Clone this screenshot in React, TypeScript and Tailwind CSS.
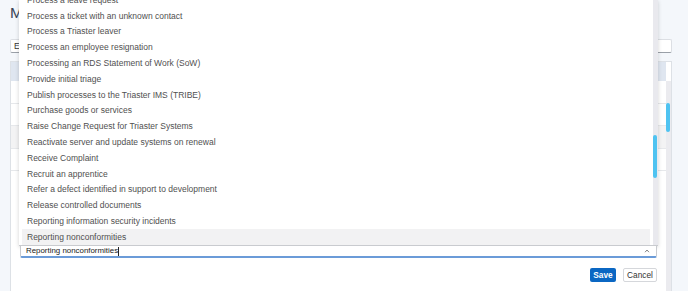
import React from "react";

const items = [
  "Process a leave request",
  "Process a ticket with an unknown contact",
  "Process a Triaster leaver",
  "Process an employee resignation",
  "Processing an RDS Statement of Work (SoW)",
  "Provide initial triage",
  "Publish processes to the Triaster IMS (TRIBE)",
  "Purchase goods or services",
  "Raise Change Request for Triaster Systems",
  "Reactivate server and update systems on renewal",
  "Receive Complaint",
  "Recruit an apprentice",
  "Refer a defect identified in support to development",
  "Release controlled documents",
  "Reporting information security incidents",
  "Reporting nonconformities",
];

export default function App() {
  return (
    <div className="relative w-[688px] h-[291px] overflow-hidden bg-[#f4f7fb] pl-[10px] pr-[16px] flex flex-col font-['Liberation_Sans',Arial,sans-serif]">
      <h1 className="pt-[4px] h-[35px] text-[15.5px] leading-[18px] text-[#3a4557] font-normal">Manage processes</h1>
      <div className="h-[14px] mt-[4px] bg-white border border-[#dcdfe4] border-b-[#9aa0a8] rounded-[2px] flex items-center pl-[3px] text-[8.5px] text-[#333]">
        Edit
      </div>
      <div className="mt-[8px] flex-1 bg-white border border-[#dde1e6] border-b-0 flex flex-col">
        <div className="flex">
          <div className="flex-1 h-[19px] bg-[#dfe6f0]"></div>
          <div className="w-[5px]"></div>
        </div>
        <div className="flex flex-1">
          <div className="flex-1 flex flex-col">
            <div className="h-[23px] border-b border-[#e6e8eb]"></div>
            <div className="h-[22px] border-b border-[#e6e8eb]"></div>
            <div className="h-[23px] border-b border-[#e6e8eb] bg-[#f3f3f4]"></div>
            <div className="h-[22px] border-b border-[#e6e8eb]"></div>
          </div>
          <div className="w-[5px] bg-[#ebebef] pt-[22px]">
            <div className="w-[4px] h-[29px] rounded-full bg-[#4fc3f1]"></div>
          </div>
        </div>
      </div>

      <div className="absolute left-[19px] top-0 w-[639px] flex flex-col">
        <div className="h-[246px] bg-white shadow-[0_1px_4px_rgba(0,0,0,0.18)] border-b border-[#c9cbcf] flex overflow-hidden">
          <div className="flex-1 flex flex-col justify-end pl-[3px] pr-[3px]">
            {items.map((t, i) => (
              <div
                key={t}
                className={
                  "h-[15.8px] shrink-0 flex items-center pl-[5px] text-[8.5px] text-[#505050] whitespace-nowrap " +
                  (i === items.length - 1 ? "bg-[#f2f2f3]" : "")
                }
              >
                {t}
              </div>
            ))}
          </div>
          <div className="w-[5px] bg-[#e9e9ee] pt-[135px]">
            <div className="w-[4px] h-[43px] rounded-full bg-[#4fc3f1]"></div>
          </div>
        </div>
        <div className="h-[12px] ml-[1px] mr-[1px] bg-white border border-[#c9cbcf] border-t-0 border-b-[2px] border-b-[#6b9bd8] rounded-b-[2px] flex items-center pl-[5px] pr-[6px] text-[7.9px] text-[#222]">
          <span>Reporting nonconformities</span>
          <span className="w-[1px] h-[9px] bg-[#222]"></span>
          <span className="flex-1"></span>
          <svg width="6" height="4" viewBox="0 0 6 4">
            <polyline points="1,3.2 3,1 5,3.2" fill="none" stroke="#777" strokeWidth="0.9" />
          </svg>
        </div>
        <div className="mt-[10px] flex justify-end gap-[7px] pr-[1px]">
          <button className="w-[26px] h-[14px] rounded-[2px] bg-[#0b67c3] text-white text-[8.3px] font-bold flex items-center justify-center">
            Save
          </button>
          <button className="w-[34px] h-[14px] rounded-[2px] bg-white border border-[#d5d7db] text-[#333] text-[8.3px] flex items-center justify-center">
            Cancel
          </button>
        </div>
      </div>
    </div>
  );
}
